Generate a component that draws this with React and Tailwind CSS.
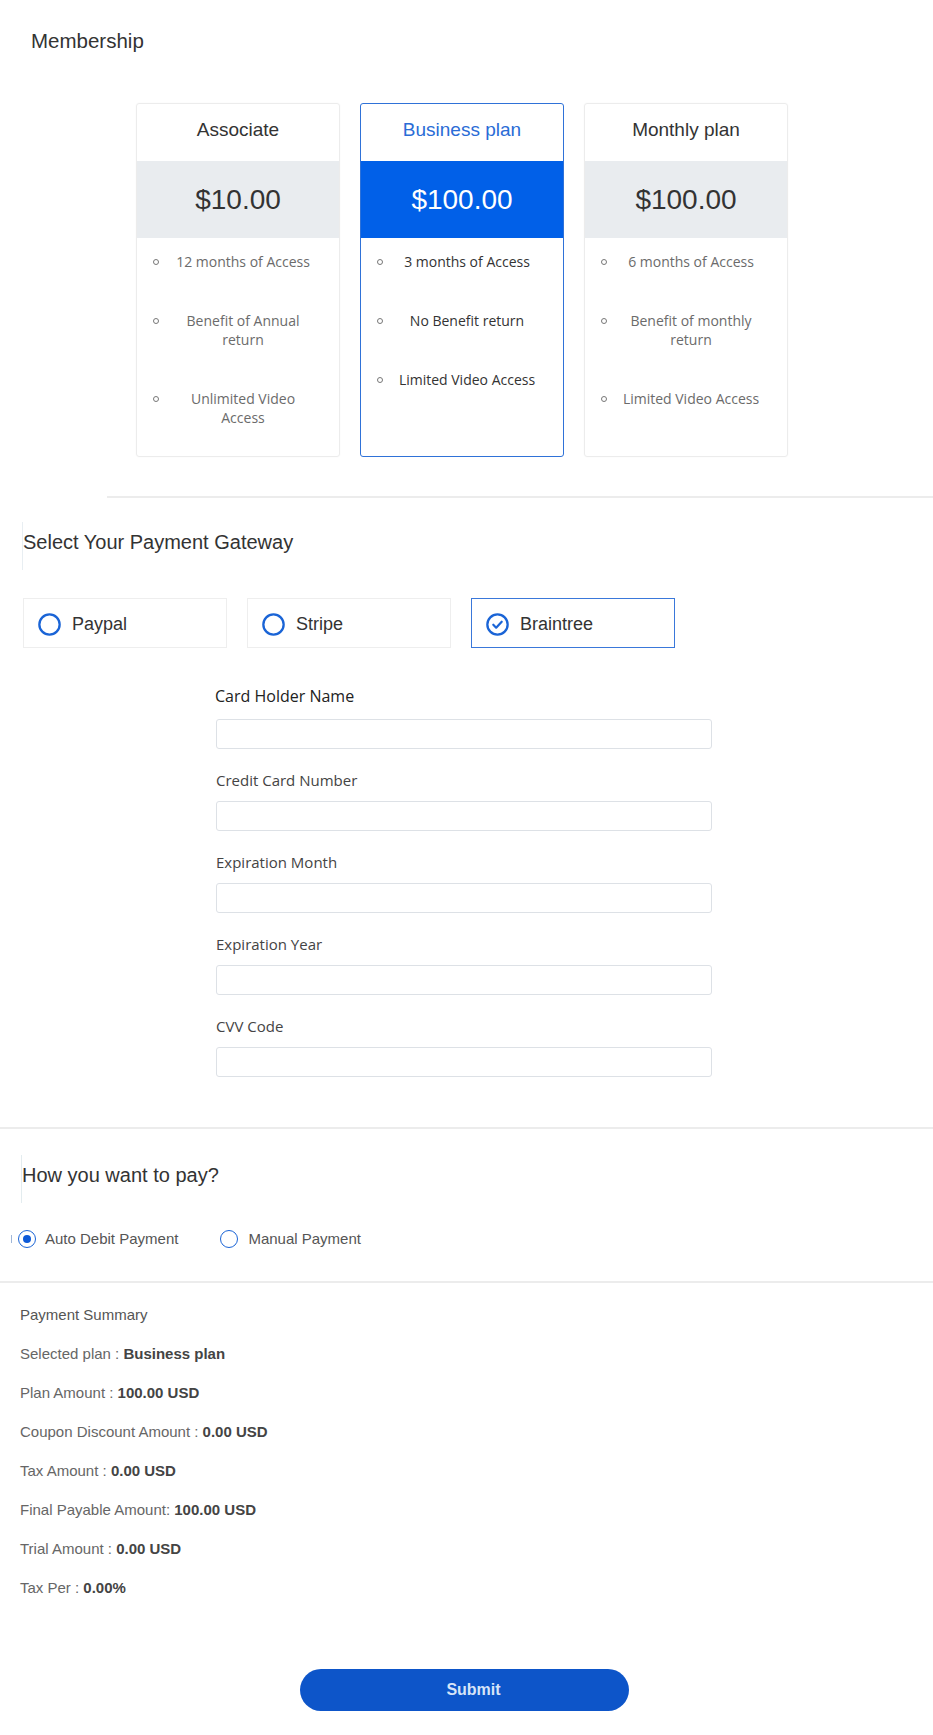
import React, { useState } from 'react';

const PLANS = [
  {
    name: 'Associate',
    price: '$10.00',
    features: ['12 months of Access', 'Benefit of Annual return', 'Unlimited Video Access'],
  },
  {
    name: 'Business plan',
    price: '$100.00',
    features: ['3 months of Access', 'No Benefit return', 'Limited Video Access'],
  },
  {
    name: 'Monthly plan',
    price: '$100.00',
    features: ['6 months of Access', 'Benefit of monthly return', 'Limited Video Access'],
  },
];

const GATEWAYS = ['Paypal', 'Stripe', 'Braintree'];

const FIELDS = ['Card Holder Name', 'Credit Card Number', 'Expiration Month', 'Expiration Year', 'CVV Code'];

const SUMMARY = [
  ['Selected plan : ', 'Business plan'],
  ['Plan Amount : ', '100.00 USD'],
  ['Coupon Discount Amount : ', '0.00 USD'],
  ['Tax Amount : ', '0.00 USD'],
  ['Final Payable Amount: ', '100.00 USD'],
  ['Trial Amount : ', '0.00 USD'],
  ['Tax Per : ', '0.00%'],
];

function PlanCard({ plan, active, onClick }) {
  return (
    <div
      onClick={onClick}
      className={`w-[204px] h-[354px] rounded-[3px] border flex flex-col overflow-hidden cursor-pointer ${
        active ? 'border-[#2f72d8]' : 'border-[#ececec] shadow-[0_0_2px_rgba(0,0,0,0.04)]'
      }`}
    >
      {/* Title */}
      <div className={`h-[57px] flex items-center justify-center pb-[4px] text-[19px] ${active ? 'text-[#2a6cd6]' : 'text-[#333]'}`}>
        {plan.name}
      </div>

      {/* Price band */}
      <div
        className={`h-[77px] flex items-center justify-center text-[28px] ${
          active ? 'bg-[#0160e8] text-white' : 'bg-[#e9ecef] text-[#333]'
        }`}
      >
        {plan.price}
      </div>

      {/* Features */}
      <ul className="flex flex-col gap-[40px] pt-[14px] font-['Open_Sans',sans-serif] text-[14px] leading-[19px]">
        {plan.features.map((f) => (
          <li key={f} className="flex items-start pl-[16px] pr-[24px]">
            <span className="mt-[7px] w-[6px] h-[6px] rounded-full border border-[#777] shrink-0" />
            <span className={`ml-[12px] flex-1 text-center ${active ? 'text-[#333]' : 'text-[#6b6b6b]'}`}>{f}</span>
          </li>
        ))}
      </ul>
    </div>
  );
}

function GatewayRadio({ checked }) {
  if (checked) {
    return (
      <svg width="23" height="23" viewBox="0 0 24 24" className="shrink-0">
        <circle cx="12" cy="12" r="10.6" fill="none" stroke="#1a64d6" strokeWidth="2.4" />
        <path d="M7.6 12.3l3 3 5.8-6.2" fill="none" stroke="#1a64d6" strokeWidth="2.3" strokeLinecap="round" strokeLinejoin="round" />
      </svg>
    );
  }
  return (
    <svg width="23" height="23" viewBox="0 0 24 24" className="shrink-0">
      <circle cx="12" cy="12" r="10.6" fill="none" stroke="#1a64d6" strokeWidth="2.4" />
    </svg>
  );
}

export default function App() {
  const [plan, setPlan] = useState(1);
  const [gateway, setGateway] = useState('Braintree');
  const [payMode, setPayMode] = useState('auto');

  return (
    <div className="w-[933px] min-h-[1735px] bg-white font-['Liberation_Sans',Arial,sans-serif] text-[#333] pb-[25px]">
      {/* Membership */}
      <div className="pl-[31px] pt-[29px] text-[20.5px] leading-[24px] text-[#333]">Membership</div>

      <div className="mt-[50px] pl-[136px] flex gap-[20px]">
        {PLANS.map((p, i) => (
          <PlanCard key={p.name} plan={p} active={plan === i} onClick={() => setPlan(i)} />
        ))}
      </div>

      <div className="mt-[39px] ml-[107px] h-[2px] bg-[#ececec]" />

      {/* Payment gateway */}
      <div className="mt-[24px] ml-[22px] h-[48px] border-l border-[#e8eef2] pt-[8px]">
        <div className="text-[20px] leading-[24px] text-[#333]">Select Your Payment Gateway</div>
      </div>

      <div className="mt-[28px] pl-[23px] flex gap-[20px]">
        {GATEWAYS.map((g) => (
          <button
            key={g}
            onClick={() => setGateway(g)}
            className={`w-[204px] h-[50px] border flex items-center gap-[11px] pl-[14px] pt-[3px] text-[18px] text-[#333] ${
              gateway === g ? 'border-[#3a78da]' : 'border-[#eeeeee]'
            }`}
          >
            <GatewayRadio checked={gateway === g} />
            <span>{g}</span>
          </button>
        ))}
      </div>

      {/* Card form */}
      <form className="mt-[38px] ml-[215px] w-[497px] flex flex-col gap-[21px] font-['Open_Sans',sans-serif]">
        {FIELDS.map((f, i) => (
          <div key={f} className="flex flex-col">
            <label
              className={`leading-[20px] ${i === 0 ? 'text-[16px] text-[#222] mb-[13px]' : 'text-[15px] text-[#444] mb-[11px] pl-[1px]'}`}
            >
              {f}
            </label>
            <input className="ml-[1px] h-[30px] rounded-[3px] border border-[#dde1e6] outline-none px-2 text-sm" />
          </div>
        ))}
      </form>

      <div className="mt-[50px] h-[2px] bg-[#ececec]" />

      {/* Pay mode */}
      <div className="mt-[26px] ml-[21px] h-[48px] border-l border-[#e3ecef] pt-[8px]">
        <div className="text-[20px] leading-[24px] text-[#333]">How you want to pay?</div>
      </div>

      <div className="mt-[26px] h-[20px] flex items-center text-[15px] text-[#555] relative">
        <span className="absolute left-[11px] top-[6px] w-[1px] h-[8px] bg-[#9fb6d8]" />
        <label className="flex items-center ml-[18px] cursor-pointer" onClick={() => setPayMode('auto')}>
          <span className="w-[18px] h-[18px] rounded-full border-[1.5px] border-[#1a64d6] flex items-center justify-center">
            {payMode === 'auto' && <span className="w-[8px] h-[8px] rounded-full bg-[#0d5ad8]" />}
          </span>
          <span className="ml-[9px]">Auto Debit Payment</span>
        </label>
        <label className="flex items-center ml-[42px] cursor-pointer" onClick={() => setPayMode('manual')}>
          <span className="w-[18px] h-[18px] rounded-full border-[1.5px] border-[#1a64d6] flex items-center justify-center">
            {payMode === 'manual' && <span className="w-[8px] h-[8px] rounded-full bg-[#0d5ad8]" />}
          </span>
          <span className="ml-[10px]">Manual Payment</span>
        </label>
      </div>

      <div className="mt-[32px] h-[2px] bg-[#ececec]" />

      {/* Summary */}
      <div className="mt-[22px] pl-[20px] flex flex-col gap-[19px] text-[15px] leading-[20px]">
        <div className="text-[#555]">Payment Summary</div>
        {SUMMARY.map(([k, v]) => (
          <div key={k} className="text-[#666]">
            {k}
            <span className="font-bold text-[#444]">{v}</span>
          </div>
        ))}
      </div>

      <div className="mt-[71px] flex justify-center pr-[4px]">
        <button className="w-[329px] h-[42px] rounded-full bg-[#0d55c9] text-[#d6e4f8] text-[16px] font-bold pl-[18px]">Submit</button>
      </div>
    </div>
  );
}
